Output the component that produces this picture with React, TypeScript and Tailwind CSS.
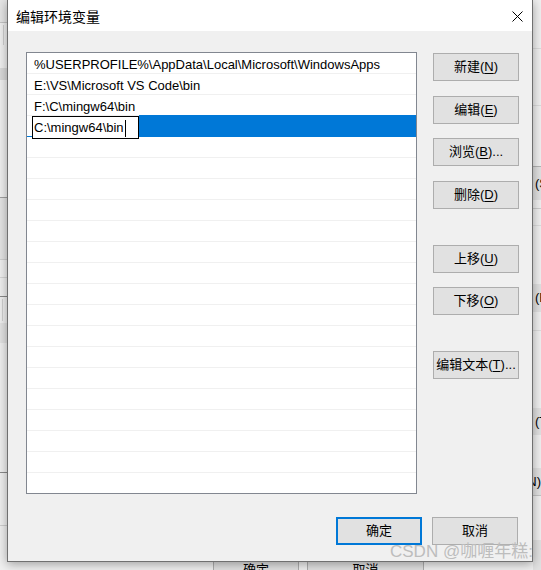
const paths = [
  "%USERPROFILE%\\AppData\\Local\\Microsoft\\WindowsApps",
  "E:\\VS\\Microsoft VS Code\\bin",
  "F:\\C\\mingw64\\bin",
]

function Btn({ label, mn, tail = "", className = "" }: { label: string; mn: string; tail?: string; className?: string }) {
  return (
    <div
      className={`flex h-[28px] w-[86px] items-center justify-center border border-[#adadad] bg-[#e1e1e1] text-[13px] text-black ${className}`}
    >
      {label}(<span className="underline underline-offset-2">{mn}</span>){tail}
    </div>
  )
}

function PlainBtn({ label, primary = false }: { label: string; primary?: boolean }) {
  return (
    <div
      className={`flex h-[28px] w-[86px] items-center justify-center bg-[#e1e1e1] text-[13px] text-black ${
        primary ? "border-2 border-[#0078d7]" : "border border-[#adadad]"
      }`}
    >
      {label}
    </div>
  )
}

// bits of the window lying behind the dialog
function BackWindow() {
  return (
    <div className="flex h-[570px] w-[541px] text-[13px] text-black">
      {/* left strip */}
      <div className="flex w-[7px] flex-col">
        <div className="h-[23px] border-b border-[#c4c4c4] bg-[#e6e6e6]" />
        <div className="h-[45px] pl-[3px] pt-[2px]">
          <div className="h-[20px] w-px bg-[#cfcfcf]" />
        </div>
        <div className="h-[12px] bg-[#dadada]" />
        <div className="h-[117px]" />
        <div className="h-[63px] border-y border-t-[#a0a0a0] border-b-[#d0d0d0] bg-[#e5e5e5]" />
        <div className="h-[18px] border-b border-[#d6d6d6]" />
        <div className="h-[19px] border-b border-[#8a8a8a]" />
        <div className="h-[26px] pl-[2px] pt-[2px]">
          <div className="h-[22px] w-px bg-[#d0d0d0]" />
        </div>
        <div className="h-[20px] bg-[#e3e3e3]" />
        <div className="h-[130px] border-b border-[#8a8a8a]" />
        <div className="h-[53px] border-b border-[#cfcfcf]" />
      </div>

      {/* middle: buttons peeking out under the dialog */}
      <div className="flex flex-1 flex-col justify-end">
        <div className="flex gap-[8px] pl-[206px]">
          <div className="flex h-[15px] w-[86px] justify-center border-x border-t border-[#adadad] bg-[#e1e1e1] pt-[6px] leading-[16px]">
            确定
          </div>
          <div className="flex h-[15px] w-[117px] justify-center border-x border-t border-[#adadad] bg-[#e1e1e1] pt-[6px] leading-[16px]">
            取消
          </div>
        </div>
      </div>

      {/* right strip */}
      <div className="flex w-[8px] flex-col overflow-hidden whitespace-nowrap">
        <div className="h-[49px] border-b border-[#dcdcdc]" />
        <div className="h-[57px] border-b border-[#dcdcdc]" />
        <div className="h-[60px]" />
        <div className="flex h-[34px] items-center border-t border-[#b4b4b4] bg-[#e1e1e1] pl-[2px]">(S</div>
        <div className="h-[9px] border-b border-[#cccccc]" />
        <div className="h-[17px] border-b border-[#dddddd]" />
        <div className="h-[58px]" />
        <div className="flex h-[28px] items-center bg-[#e1e1e1] pl-[2px]">(E</div>
        <div className="h-[19px] border-b border-[#dddddd]" />
        <div className="h-[77px]" />
        <div className="flex h-[27px] items-center bg-[#e1e1e1] pl-[2px]">(T</div>
        <div className="h-[33px]" />
        <div className="flex h-[28px] items-center justify-end border-b border-[#c4c4c4] bg-[#e1e1e1]">N)</div>
        <div className="h-[44px]" />
        <div className="flex-1 bg-[#e1e1e1]" />
      </div>
    </div>
  )
}

export default function App() {
  const rows = Array.from({ length: 21 }, (_, i) => i)

  return (
    <div className="relative h-[570px] w-[541px] overflow-hidden bg-[#f0f0f0] font-['Liberation_Sans','Noto_Sans_CJK_SC',sans-serif]">
      <BackWindow />

      {/* dialog */}
      <div className="absolute left-[7px] top-0 flex h-[562px] w-[526px] flex-col border-x border-b border-[#707070] bg-[#f0f0f0] shadow-[0_2px_10px_rgba(0,0,0,0.35)]">
        {/* title bar */}
        <div className="flex h-[31px] items-center justify-between bg-white pl-[8px] pr-[9px]">
          <span className="pt-[2px] font-['Noto_Sans_CJK_SC',sans-serif] text-[14px] text-black">编辑环境变量</span>
          <svg width="11" height="11" viewBox="0 0 11 11" className="mt-[1px]">
            <path d="M0.5 0.5 L10.5 10.5 M10.5 0.5 L0.5 10.5" stroke="#000" strokeWidth="1" fill="none" />
          </svg>
        </div>

        {/* body */}
        <div className="flex flex-1 flex-col">
          <div className="flex pl-[18px] pt-[21px]">
            {/* list */}
            <div className="h-[442px] w-[391px] overflow-hidden border border-[#828790] bg-white">
              {rows.map((i) => {
                if (i === 3) {
                  return (
                    <div key={i} className="relative flex h-[21px] border-b border-[#0078d7]">
                      <div className="w-[5px] bg-white" />
                      <div className="z-10 flex h-[23px] w-[107px] shrink-0 items-center border border-black bg-white pl-[1px] pt-px text-[13px] text-black">
                        <span>C:\mingw64\bin</span>
                        <span className="ml-[1px] h-[17px] w-px bg-black" />
                      </div>
                      <div className="-mt-px h-[21px] flex-1 bg-[#0078d7]" />
                    </div>
                  )
                }
                return (
                  <div
                    key={i}
                    className="flex h-[21px] items-center border-b border-[#f0f0f0] pl-[7px] pt-[3px] text-[13px] leading-[18px] text-black"
                  >
                    {paths[i] ?? ""}
                  </div>
                )
              })}
            </div>

            {/* side buttons */}
            <div className="ml-[16px] flex flex-col">
              <Btn label="新建" mn="N" className="mt-px" />
              <Btn label="编辑" mn="E" className="mt-[15px]" />
              <Btn label="浏览" mn="B" tail="..." className="mt-[14px]" />
              <Btn label="删除" mn="D" className="mt-[15px]" />
              <Btn label="上移" mn="U" className="mt-[36px]" />
              <Btn label="下移" mn="O" className="mt-[14px]" />
              <Btn label="编辑文本" mn="T" tail="..." className="mt-[36px]" />
            </div>
          </div>

          <div className="mt-auto flex justify-end gap-[10px] pb-[16px] pr-[14px]">
            <PlainBtn label="确定" primary />
            <PlainBtn label="取消" />
          </div>
        </div>
      </div>

      {/* watermark */}
      <div className="absolute left-[390px] top-[541px] text-[17px] leading-[22px] text-[#bdbdbd]">
        CSDN @咖喱年糕:
      </div>
    </div>
  )
}
